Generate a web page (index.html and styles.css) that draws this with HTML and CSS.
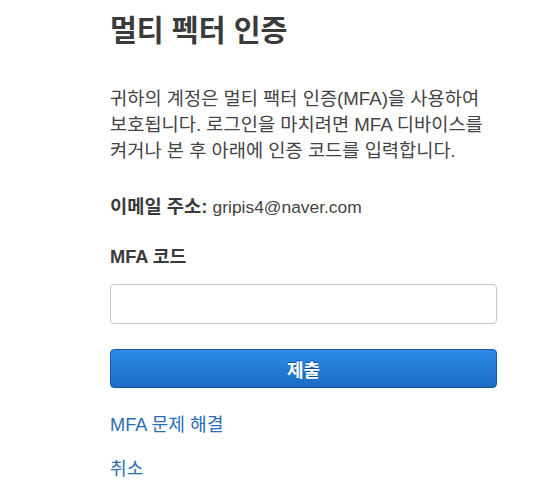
FILE: index.html
```html
<!DOCTYPE html>
<html lang="ko">
<head>
<meta charset="utf-8">
<link rel="stylesheet" href="styles.css">
</head>
<body>
<main class="panel">
  <h1 class="title">멀티 펙터 인증</h1>
  <p class="intro">귀하의 계정은 멀티 팩터 인증(MFA)을 사용하여 보호됩니다. 로그인을 마치려면 MFA 디바이스를 켜거나 본 후 아래에 인증 코드를 입력합니다.</p>
  <p class="email"><strong>이메일 주소:</strong> <span class="lat">gripis4@naver.com</span></p>
  <label class="label" for="code">MFA 코드</label>
  <input class="field" id="code" type="text">
  <button class="submit" type="button">제출</button>
  <a class="link link-first" href="#">MFA 문제 해결</a>
  <a class="link" href="#">취소</a>
</main>
</body>
</html>
```

FILE: styles.css
```css
html, body {
  margin: 0;
  padding: 0;
  background: #ffffff;
}
body {
  font-family: "Liberation Sans", Arial, "Noto Sans CJK KR", sans-serif;
  color: #444444;
}
.panel {
  width: 387px;
  margin-left: 110px;
  display: flex;
  flex-direction: column;
  align-items: flex-start;
}
.lat {
  font-size: 17.4px;
}
.title {
  margin: 12px 0 0;
  font-size: 29.2px;
  line-height: 38px;
  font-weight: bold;
  color: #3a3a3a;
}
.intro {
  margin: 36px 0 0;
  font-size: 18.7px;
  line-height: 26px;
  word-break: keep-all;
}
.email {
  margin: 30px 0 0;
  font-size: 18.7px;
  line-height: 26px;
}
.email strong {
  color: #3a3a3a;
}
.label {
  margin-top: 24px;
  font-size: 18.2px;
  line-height: 26px;
  font-weight: bold;
  color: #3a3a3a;
}
.field {
  box-sizing: border-box;
  margin-top: 14px;
  width: 387px;
  height: 40px;
  border: 1px solid #c8c8c8;
  border-radius: 4px;
  background: #ffffff;
}
.submit {
  box-sizing: border-box;
  margin-top: 25px;
  width: 387px;
  height: 39px;
  border: 1px solid #175ba5;
  border-radius: 4px;
  background: linear-gradient(#2e8be8, #1a6bc4);
  color: #ffffff;
  font-family: inherit;
  font-size: 18px;
  font-weight: bold;
  text-shadow: 0 -1px 0 rgba(0, 0, 0, 0.35);
}
.link {
  font-size: 18.2px;
  line-height: 26px;
  color: #2c6db5;
  text-decoration: none;
}
.link-first {
  margin-top: 24px;
}
.link + .link {
  margin-top: 18px;
}
```
